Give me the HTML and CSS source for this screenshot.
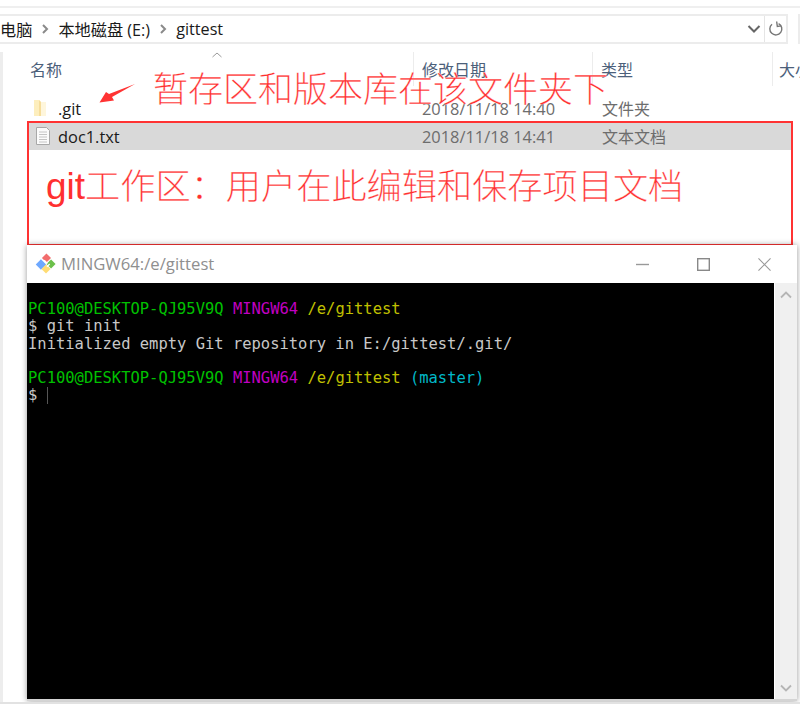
FILE: index.html
```html
<!DOCTYPE html>
<html lang="zh">
<head>
<meta charset="utf-8">
<title>gittest</title>
<link rel="stylesheet" href="styles.css">
</head>
<body>
<main class="screen">
  <div class="topline"></div>
  <div class="addressbar">
    <div class="address">
      <div class="crumbs">
        <span>电脑</span>
        <svg class="crumb-arrow" viewBox="0 0 8 10"><path d="M2 1l4 4-4 4" fill="none" stroke="#8a8a8a" stroke-width="2"/></svg>
        <span>本地磁盘 (E:)</span>
        <svg class="crumb-arrow" viewBox="0 0 8 10"><path d="M2 1l4 4-4 4" fill="none" stroke="#8a8a8a" stroke-width="2"/></svg>
        <span>gittest</span>
      </div>
      <svg class="chevron" viewBox="0 0 14 10"><path d="M1.500 2l5.500 5.500L12.500 2" fill="none" stroke="#666" stroke-width="2"/></svg>
      <div class="refresh">
        <svg viewBox="0 0 16 16" width="16" height="16"><path d="M10.600 2.600A6 6 0 1 1 4 3.300" fill="none" stroke="#777" stroke-width="1.400"/><path d="M9 .5v5h4" fill="none" stroke="#777" stroke-width="1.400" transform="rotate(-8 9 3)"/></svg>
      </div>
    </div>
    <div class="searchbox"></div>
  </div>
  <div class="filelist">
    <div class="columns">
      <div class="col col-name">名称<svg class="sort" viewBox="0 0 10 6"><path d="M.5 5L5 1l4.500 4" fill="none" stroke="#9a9a9a"/></svg></div>
      <div class="col col-date">修改日期</div>
      <div class="col col-type">类型</div>
      <div class="col col-size">大小</div>
    </div>
    <div class="row">
      <div class="cell-name">
        <svg class="fileicon" viewBox="0 0 16 18"><path d="M1 1h5l2 2v14H1z" fill="#fdeebd"/><path d="M8 3h5v14H8z" fill="#fef6dc"/><path d="M6 1l2 2v14H6z" fill="#f6dd9b"/></svg>
        <span>.git</span>
      </div>
      <div class="cell-date">2018/11/18 14:40</div>
      <div class="cell-type">文件夹</div>
    </div>
    <div class="row row-selected">
      <div class="cell-name">
        <svg class="fileicon" viewBox="0 0 16 18"><path d="M1.500.5h10l3 3v14h-13z" fill="#fbfbfb" stroke="#a8a8a8"/><path d="M4 5h8M4 7.500h8M4 10h8M4 12.500h8M4 15h8" stroke="#c4c4c4"/></svg>
        <span>doc1.txt</span>
      </div>
      <div class="cell-date">2018/11/18 14:41</div>
      <div class="cell-type">文本文档</div>
    </div>
  </div>

  <div class="note note-repo">暂存区和版本库在该文件夹下</div>
  <svg class="arrow" viewBox="0 0 40 24" width="40" height="24"><path d="M1.500 20.500L8 10l3 2L37 2 14 15l2 3.500z" fill="#ff3333"/></svg>
  <div class="workspace">
    <div class="note note-work"><span class="git">git</span>工作区：用户在此编辑和保存项目文档</div>
  </div>

  <section class="terminal">
    <header class="term-title">
      <svg class="giticon" viewBox="0 0 24 24" width="22" height="22"><rect x="2.500" y="8.500" width="8" height="8" transform="rotate(-45 6.500 12.500)" fill="#6ea8fe"/><rect x="9" y="2" width="7" height="7" transform="rotate(-45 12.500 5.500)" fill="#f26d6d"/><rect x="14" y="8.500" width="7" height="7" transform="rotate(-45 17.500 12)" fill="#6cc04a"/><rect x="8.500" y="14" width="7" height="7" transform="rotate(-45 12 17.500)" fill="#ffdc73"/><path d="M10 8l3.500 3.500M13 15l3-3" stroke="#fff" stroke-width="1.500"/></svg>
      <span class="term-name">MINGW64:/e/gittest</span>
      <div class="controls">
        <svg viewBox="0 0 14 14" width="13" height="13"><path d="M0 7h14" stroke="#999" stroke-width="1.500"/></svg>
        <svg viewBox="0 0 14 14" width="13" height="13"><rect x=".75" y=".75" width="12.500" height="12.500" fill="none" stroke="#888" stroke-width="1.500"/></svg>
        <svg viewBox="0 0 14 14" width="13" height="13"><path d="M.5.500l13 13M13.500.5l-13 13" stroke="#999" stroke-width="1.200"/></svg>
      </div>
    </header>
    <div class="term-body">
      <pre class="console">
<span class="g">PC100@DESKTOP-QJ95V9Q</span> <span class="m">MINGW64</span> <span class="y">/e/gittest</span>
$ git init
Initialized empty Git repository in E:/gittest/.git/

<span class="g">PC100@DESKTOP-QJ95V9Q</span> <span class="m">MINGW64</span> <span class="y">/e/gittest</span> <span class="c">(master)</span>
$ <span class="cursor"></span></pre>
      <div class="scrollbar">
        <svg viewBox="0 0 12 8" width="12" height="8"><path d="M1 6.500l5-5 5 5" fill="none" stroke="#b5b5b5" stroke-width="1.800"/></svg>
        <svg viewBox="0 0 12 8" width="12" height="8"><path d="M1 1.500l5 5 5-5" fill="none" stroke="#b5b5b5" stroke-width="1.800"/></svg>
      </div>
    </div>
  </section>
</main>
</body>
</html>
```
FILE: styles.css
```css
* { box-sizing: border-box; }
html, body { margin: 0; padding: 0; background: #fff; }
.screen {
  position: relative;
  width: 800px;
  height: 704px;
  overflow: hidden;
  font-family: "Open Sans", "Noto Sans CJK SC", sans-serif;
  background: #fff;
  border-bottom: 2px solid #e2e2e2;
}
.topline { height: 2px; margin-top: 6px; background: #efefef; }
.addressbar { display: flex; gap: 10px; margin-top: 6px; height: 30px; }
.address {
  flex: 0 0 788px;
  display: flex;
  align-items: center;
  border: 2px solid #ececec;
  border-left: 0;
}
.crumbs {
  flex: 1;
  display: flex;
  align-items: center;
  gap: 9px;
  font-size: 16.200px;
  color: #1a1a1a;
  white-space: nowrap;
}
.crumb-arrow { width: 8px; height: 10px; }
.chevron { width: 14px; height: 10px; margin-right: 3px; }
.refresh {
  width: 22px;
  height: 100%;
  display: flex;
  align-items: center;
  justify-content: center;
  border-left: 1px solid #e5e5e5;
}
.searchbox { flex: 1; border: 2px solid #ececec; border-right: 0; }
.filelist {
  margin: 8px 0 0 0;
  padding-left: 3px;
  border-left: 3px solid #ededed;
  height: 650px;
}
.columns { display: flex; height: 34px; margin-bottom: 8px; color: #4c607a; font-size: 16px; }
.col { display: flex; align-items: center; position: relative; flex: none; }
.col-name { width: 408px; padding-left: 24px; border-right: 1px solid #ececec; }
.col-date { width: 179px; padding-left: 8px; border-right: 1px solid #ececec; }
.col-type { width: 180px; padding-left: 8px; border-right: 1px solid #ececec; }
.col-size { padding-left: 6px; white-space: nowrap; }
.sort { position: absolute; left: 206px; top: 0; width: 10px; height: 6px; }
.row { display: flex; align-items: center; height: 28px; font-size: 16.400px; color: #6d6d6d; }
.row-selected { background: #d9d9d9; margin-left: 22px; width: 763px; }
.cell-name { display: flex; align-items: center; color: #1a1a1a; flex: none; }
.row:not(.row-selected) .cell-name { padding-left: 27px; width: 416px; }
.row-selected .cell-name { padding-left: 7px; width: 394px; }
.fileicon { width: 16px; height: 18px; margin-right: 7px; flex: none; }
.row:not(.row-selected) .fileicon { margin-right: 9px; }
.cell-date { width: 180px; flex: none; }
.cell-type { flex: 1; font-size: 16px; }

.note {
  font-family: "Noto Sans CJK SC", sans-serif;
  font-size: 35.200px;
  line-height: 42px;
  font-weight: 300;
  color: #ff3030;
  white-space: nowrap;
  -webkit-text-stroke: 0.3px rgba(255, 255, 255, .8);
}
.note-repo { position: absolute; left: 153px; top: 66px; font-size: 35px; }
.arrow { position: absolute; left: 98px; top: 82px; }
.workspace {
  position: absolute;
  left: 27px;
  top: 121px;
  width: 766px;
  height: 125px;
  border: 2px solid #ff3333;
  padding: 40px 0 0 17px;
}
.git {
  font-family: "Liberation Sans", sans-serif;
  font-size: 37px;
  font-weight: 400;
  -webkit-text-stroke: 0;
}

.terminal {
  position: absolute;
  left: 27px;
  top: 245px;
  width: 770px;
  height: 456px;
  display: flex;
  flex-direction: column;
  box-shadow: 0 0 6px rgba(0, 0, 0, .4);
}
.term-title {
  height: 38px;
  flex: none;
  display: flex;
  align-items: center;
  padding: 0 0 0 8px;
  background: #fff;
}
.giticon { flex: none; margin-right: 4px; }
.term-name { font-size: 16.700px; color: #8f8f8f; white-space: nowrap; margin-top: -2px; }
.controls { margin-left: auto; margin-right: 26px; display: flex; gap: 48px; }
.term-body { flex: 1; display: flex; min-height: 0; border-bottom: 2px solid #d4d4d4; }
.console {
  flex: 1;
  margin: 0;
  padding: 18px 0 0 1px;
  background: #000;
  color: #c8c8c8;
  font-family: "DejaVu Sans Mono", monospace;
  font-size: 15.480px;
  line-height: 17.250px;
}
.g { color: #00c000; }
.m { color: #c000c0; }
.y { color: #c0c000; }
.c { color: #00b8c8; }
.cursor {
  display: inline-block;
  width: 1px;
  height: 17px;
  vertical-align: -4px;
  background: #555;
}
.scrollbar {
  width: 23px;
  flex: none;
  background: #f0f0f0;
  border-left: 1px solid #fff;
  display: flex;
  flex-direction: column;
  align-items: center;
  justify-content: space-between;
  padding: 8px 0 7px;
}
```
